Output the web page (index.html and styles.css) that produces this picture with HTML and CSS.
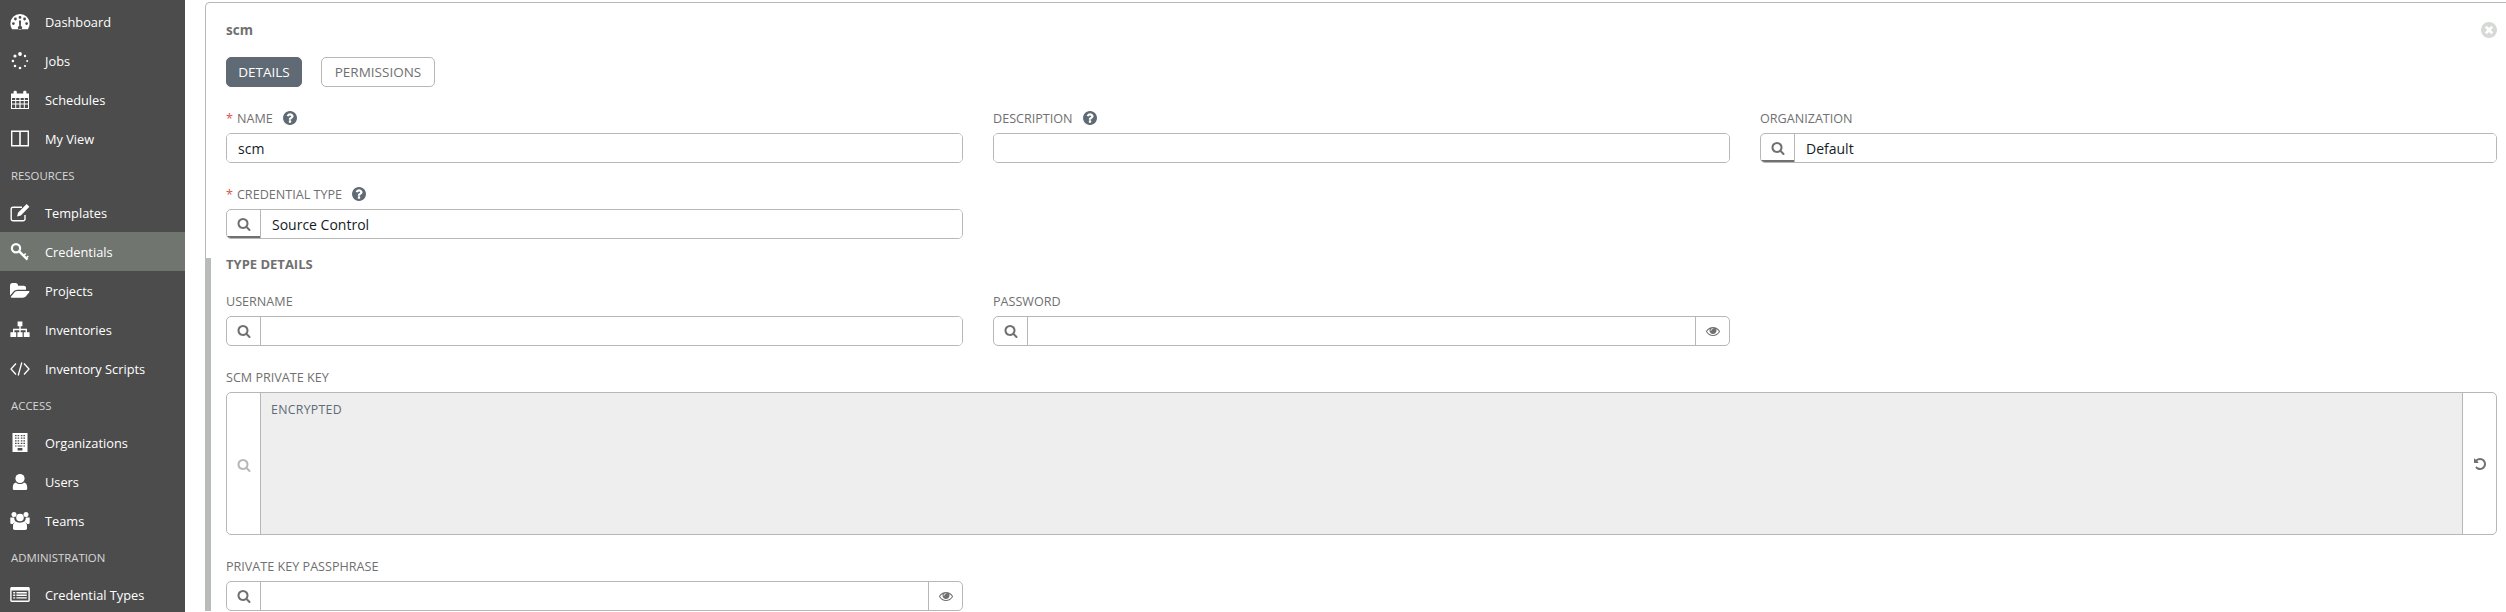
FILE: index.html
```html
<!DOCTYPE html>
<html lang="en">
<head>
    <meta charset="UTF-8">
    <title>Credentials</title>
    <link rel="stylesheet" href="styles.css">
</head>
<body>

    <!-- Icon sprite -->
    <svg class="sprite" xmlns="http://www.w3.org/2000/svg">
        <symbol id="i-search" viewBox="0 0 1792 1792"><path d="M1216 832q0-185-131.5-316.5t-316.5-131.5-316.5 131.5-131.5 316.5 131.5 316.5 316.5 131.5 316.5-131.5 131.5-316.5zm512 832q0 52-38 90t-90 38q-54 0-90-38l-343-342q-179 124-399 124-143 0-273.5-55.5t-225-150-150-225-55.5-273.5 55.5-273.5 150-225 225-150 273.5-55.5 273.5 55.5 225 150 150 225 55.5 273.5q0 220-124 399l343 343q37 37 37 90z"/></symbol>
        <symbol id="i-help" viewBox="128 128 1536 1536"><path d="M1024 1376v-192q0-14-9-23t-23-9h-192q-14 0-23 9t-9 23v192q0 14 9 23t23 9h192q14 0 23-9t9-23zm256-672q0-88-55.5-163t-138.5-116-170-41q-243 0-371 213-15 24 8 42l132 100q7 6 19 6 16 0 25-12 53-68 86-92 34-24 86-24 48 0 85.5 26t37.5 59q0 38-20 61t-68 45q-63 28-115.5 86.5t-52.5 125.5v36q0 14 9 23t23 9h192q14 0 23-9t9-23q0-19 21.5-49.5t54.5-49.5q32-18 49-28.5t46-35 44.5-48 28-60.5 12.5-81zm384 192q0 209-103 385.5t-279.5 279.5-385.5 103-385.5-103-279.5-279.5-103-385.5 103-385.5 279.5-279.5 385.5-103 385.5 103 279.5 279.5 103 385.5z"/></symbol>
        <symbol id="i-close" viewBox="128 128 1536 1536"><path d="M1277 1122q0-26-19-45l-181-181 181-181q19-19 19-45 0-27-19-46l-90-90q-19-19-46-19-26 0-45 19l-181 181-181-181q-19-19-45-19-27 0-46 19l-90 90q-19 19-19 46 0 26 19 45l181 181-181 181q-19 19-19 45 0 27 19 46l90 90q19 19 46 19 26 0 45-19l181-181 181 181q19 19 45 19 27 0 46-19l90-90q19-19 19-46zm387-226q0 209-103 385.5t-279.5 279.5-385.5 103-385.5-103-279.5-279.5-103-385.5 103-385.5 279.5-279.5 385.5-103 385.5 103 279.5 279.5 103 385.5z"/></symbol>
        <symbol id="i-eye" viewBox="0 256 1792 1280"><path d="M1664 960q-152-236-381-353 61 104 61 225 0 185-131.5 316.5t-316.5 131.5-316.5-131.5-131.5-316.5q0-121 61-225-229 117-381 353 133 205 333.5 326.5t434.5 121.5 434.5-121.5 333.5-326.5zm-720-384q0-20-14-34t-34-14q-125 0-214.5 89.5t-89.5 214.5q0 20 14 34t34 14 34-14 14-34q0-86 61-147t147-61q20 0 34-14t14-34zm848 384q0 34-20 69-140 230-376.5 368.5t-499.5 138.5-499.5-139-376.5-368q-20-35-20-69t20-69q140-229 376.5-368t499.5-139 499.5 139 376.5 368q20 35 20 69z"/></symbol>
        <symbol id="i-undo" viewBox="128 128 1536 1536"><path d="M1664 896q0 156-61 298t-164 245-245 164-298 61q-172 0-327-72.5t-264-204.5q-7-10-6.5-22.5t8.5-20.5l137-138q10-9 25-9 16 2 23 12 73 95 179 147t225 52q104 0 198.5-40.5t163.5-109.5 109.5-163.5 40.5-198.5-40.5-198.5-109.5-163.5-163.5-109.5-198.5-40.5q-98 0-188 35.5t-160 101.5l137 138q31 30 14 69-17 40-59 40h-448q-26 0-45-19t-19-45v-448q0-42 40-59 39-17 69 14l130 129q107-101 244.5-156.5t284.5-55.5q156 0 298 61t245 164 164 245 61 298z"/></symbol>
        <symbol id="i-folder" viewBox="0 0 1920 1792"><path d="M1879 952q0 31-31 66l-336 396q-43 51-120.5 86.5t-143.5 35.5h-1088q-34 0-60.5-13t-26.5-43q0-31 31-66l336-396q43-51 120.5-86.5t143.5-35.5h1088q34 0 60.5 13t26.5 43zm-343-344v160h-832q-94 0-197 47.5t-164 119.5l-337 396-5 6q0-4-.5-12.5t-.5-12.5v-960q0-92 66-158t158-66h320q92 0 158 66t66 158v32h544q92 0 158 66t66 158z"/></symbol>
        <symbol id="i-dashboard" viewBox="0 0 20 20"><path fill-rule="evenodd" d="M10 2A9.6 9.6 0 0 0 .4 11.6c0 2.2.6 4 1.7 5.6h15.8c1.1-1.6 1.7-3.4 1.7-5.6A9.6 9.6 0 0 0 10 2zM10 4a1.4 1.4 0 1 1 0 2.8A1.4 1.4 0 0 1 10 4zM5.4 5.6a1.4 1.4 0 1 1 0 2.8 1.4 1.4 0 0 1 0-2.8zM14.6 5.6a1.4 1.4 0 1 1 0 2.8 1.4 1.4 0 0 1 0-2.8zM3.4 10.2a1.4 1.4 0 1 1 0 2.8 1.4 1.4 0 0 1 0-2.8zM16.6 10.2a1.4 1.4 0 1 1 0 2.8 1.4 1.4 0 0 1 0-2.8zM9 8.5h2l-.2 5.4a2 2 0 1 1-1.6 0z"/></symbol>
        <symbol id="i-jobs" viewBox="0 0 20 20"><circle cx="10" cy="3" r="1.9"/><circle cx="15" cy="5" r="1.2"/><circle cx="17.2" cy="10" r="1"/><circle cx="15" cy="15" r="1.1"/><circle cx="10" cy="17" r="1.3"/><circle cx="5" cy="15" r="1.3"/><circle cx="2.9" cy="10" r="1.3"/><circle cx="5" cy="5" r="1.6"/></symbol>
        <symbol id="i-calendar" viewBox="0 0 20 20"><path fill-rule="evenodd" d="M1 3.5h2.6V2a1.3 1.3 0 0 1 1.3-1.3h.6A1.3 1.3 0 0 1 6.800 2v1.5h6.400V2a1.3 1.3 0 0 1 1.3-1.3h.6A1.3 1.3 0 0 1 16.400 2v1.5H19V19H1zM2 8v2h3.200V8zM6.200 8v2h3.200V8zM10.600 8v2h3.200V8zM14.800 8v2H18V8zM2 11v2.400h3.200V11zM6.200 11v2.400h3.200V11zM10.600 11v2.400h3.200V11zM14.800 11v2.400H18V11zM2 14.400V18h3.200v-3.600zM6.200 14.400V18h3.200v-3.600zM10.600 14.400V18h3.200v-3.600zM14.800 14.400V18H18v-3.600z"/></symbol>
        <symbol id="i-view" viewBox="0 0 20 20"><path fill-rule="evenodd" d="M1 1.5h18v16H1zM2.400 3v13h6.800V3zM10.800 3v13h6.800V3z"/></symbol>
        <symbol id="i-edit" viewBox="0 0 20 20"><path fill="none" stroke="currentColor" stroke-width="1.4" d="M15 12v4a1.800 1.800 0 0 1-1.800 1.800H3A1.800 1.800 0 0 1 1.200 16V6A1.800 1.800 0 0 1 3 4.200h9"/><path d="M16.600 1l2.800 2.800-8.600 8.800-3.700 1 .9-3.800z"/></symbol>
        <symbol id="i-key" viewBox="0 0 20 20"><g fill="none" stroke="currentColor"><circle cx="6" cy="6.200" r="4.100" stroke-width="2.200"/><path stroke-width="2.400" d="M9 9.200l8.500 8.500"/><path stroke-width="1.600" d="M13.500 13.800l2.300-2.300M16 16.300l2.300-2.300"/></g></symbol>
        <symbol id="i-sitemap" viewBox="0 0 20 20"><path d="M7.600 1.500h4.800v4.800H10.700v2.500h6.300v3.400h2.600v4.800h-5.800v-4.800h1.800v-2H10.700v2h1.900v4.800H7.400v-4.800h1.900v-2H4.400v2h1.800v4.800H.4v-4.800H3V8.800h6.300V6.300H7.600z"/></symbol>
        <symbol id="i-code" viewBox="0 0 20 20"><path fill="none" stroke="currentColor" stroke-width="1.300" d="M6 4.500L1 10l5 5.500M14 4.500l5 5.500-5 5.500M11.800 3.500L8.200 16.500"/></symbol>
        <symbol id="i-building" viewBox="0 0 20 20"><path fill-rule="evenodd" d="M2.500 0h15v19h-15zM5 2v1.200h1.600V2zM7.600 2v1.200h1.600V2zM10.800 2v1.200h1.600V2zM13.400 2v1.200H15V2zM5 4.600v1.200h1.600V4.600zM7.600 4.600v1.200h1.600V4.600zM10.800 4.600v1.200h1.600V4.600zM13.400 4.600v1.200H15V4.600zM5 7.200v1.200h1.600V7.200zM7.600 7.200v1.200h1.600V7.200zM10.800 7.200v1.200h1.600V7.200zM13.400 7.200v1.200H15V7.200zM5 9.800V11h1.600V9.800zM7.600 9.800V11h1.600V9.800zM10.800 9.800V11h1.600V9.800zM13.400 9.800V11H15V9.800zM5 12.400v1.200h1.600v-1.200zM13.400 12.400v1.200H15v-1.200zM7.600 12.400v1.200h4.800v-1.200zM7.600 15v2.400h4.800V15z"/></symbol>
        <symbol id="i-user" viewBox="0 0 20 20"><circle cx="10" cy="6.500" r="4.600"/><path d="M6 10.500c1 1 2.400 1.500 4 1.500s3-.5 4-1.500c2 .5 3.200 2 3.200 5v1c0 1-.7 1.500-1.700 1.500H4.500c-1 0-1.700-.5-1.700-1.500v-1c0-3 1.200-4.500 3.200-5z"/></symbol>
        <symbol id="i-users" viewBox="0 0 20 20"><circle cx="10" cy="6.500" r="3.800"/><circle cx="4" cy="3.500" r="2.500"/><circle cx="16" cy="3.500" r="2.500"/><path d="M.3 6.500h4c-.2 1.800.5 3.200 1.500 4.200-1.500.5-2.400 1.300-3 2.300H1.600C.6 13 .3 12.400.3 11.500zM19.700 6.500h-4c.2 1.800-.5 3.200-1.500 4.200 1.500.5 2.400 1.300 3 2.300h1.200c1 0 1.300-.6 1.300-1.500z"/><path d="M6 10.500c1 .8 2.500 1.200 4 1.200s3-.4 4-1.200c2 .5 3 2.200 3 5v1.800c0 1-.7 1.700-1.700 1.700H4.700c-1 0-1.700-.7-1.700-1.700v-1.800c0-2.800 1-4.500 3-5z"/></symbol>
        <symbol id="i-list" viewBox="0 0 20 20"><path fill-rule="evenodd" d="M1.800 2h16.400c.9 0 1.600.7 1.600 1.600v12c0 .9-.7 1.400-1.600 1.400H1.800C.9 17 .2 16.500.2 15.600v-12C.2 2.700.9 2 1.800 2zM1.600 5.600v9.800c0 .1.100.2.200.2h16.400c.1 0 .2-.1.200-.2V5.600zM3.200 7h2v1.400h-2zM6.400 7h10.400v1.400H6.400zM3.200 9.600h2V11h-2zM6.400 9.600h10.400V11H6.400zM3.200 12.200h2v1.400h-2zM6.400 12.200h10.400v1.400H6.400z"/></symbol>
    </svg>

    <nav class="sidebar">
        <a class="nav-item"><svg class="nav-icon"><use href="#i-dashboard"/></svg>Dashboard</a>
        <a class="nav-item"><svg class="nav-icon"><use href="#i-jobs"/></svg>Jobs</a>
        <a class="nav-item"><svg class="nav-icon"><use href="#i-calendar"/></svg>Schedules</a>
        <a class="nav-item"><svg class="nav-icon"><use href="#i-view"/></svg>My View</a>
        <div class="nav-section">RESOURCES</div>
        <a class="nav-item"><svg class="nav-icon"><use href="#i-edit"/></svg>Templates</a>
        <a class="nav-item nav-item-active"><svg class="nav-icon"><use href="#i-key"/></svg>Credentials</a>
        <a class="nav-item"><svg class="nav-icon"><use href="#i-folder"/></svg>Projects</a>
        <a class="nav-item"><svg class="nav-icon"><use href="#i-sitemap"/></svg>Inventories</a>
        <a class="nav-item"><svg class="nav-icon"><use href="#i-code"/></svg>Inventory Scripts</a>
        <div class="nav-section">ACCESS</div>
        <a class="nav-item"><svg class="nav-icon"><use href="#i-building"/></svg>Organizations</a>
        <a class="nav-item"><svg class="nav-icon"><use href="#i-user"/></svg>Users</a>
        <a class="nav-item"><svg class="nav-icon"><use href="#i-users"/></svg>Teams</a>
        <div class="nav-section">ADMINISTRATION</div>
        <a class="nav-item"><svg class="nav-icon"><use href="#i-list"/></svg>Credential Types</a>
    </nav>

    <main class="content">
        <form class="panel">

            <section class="panel-top">
                <div class="panel-head">
                    <div class="panel-title">scm</div>
                    <svg class="close-icon"><use href="#i-close"/></svg>
                </div>

                <div class="tabs">
                    <button type="button" class="tab tab-details">DETAILS</button>
                    <button type="button" class="tab tab-permissions">PERMISSIONS</button>
                </div>

                <div class="form-grid">
                    <div class="field">
                        <label class="field-label"><span class="required">*</span>NAME<svg class="help-icon"><use href="#i-help"/></svg></label>
                        <div class="control"><input class="text-input" type="text" value="scm"></div>
                    </div>
                    <div class="field">
                        <label class="field-label">DESCRIPTION<svg class="help-icon"><use href="#i-help"/></svg></label>
                        <div class="control"><input class="text-input" type="text"></div>
                    </div>
                    <div class="field">
                        <label class="field-label">ORGANIZATION</label>
                        <div class="control">
                            <span class="addon addon-selected"><svg class="addon-icon"><use href="#i-search"/></svg></span>
                            <input class="text-input" type="text" value="Default">
                        </div>
                    </div>
                    <div class="field">
                        <label class="field-label"><span class="required">*</span>CREDENTIAL TYPE<svg class="help-icon"><use href="#i-help"/></svg></label>
                        <div class="control">
                            <span class="addon addon-selected"><svg class="addon-icon"><use href="#i-search"/></svg></span>
                            <input class="text-input" type="text" value="Source Control">
                        </div>
                    </div>
                </div>
            </section>

            <section class="panel-details">
                <h3 class="details-title">TYPE DETAILS</h3>

                <div class="form-grid">
                    <div class="field">
                        <label class="field-label">USERNAME</label>
                        <div class="control">
                            <span class="addon"><svg class="addon-icon"><use href="#i-search"/></svg></span>
                            <input class="text-input" type="text">
                        </div>
                    </div>
                    <div class="field">
                        <label class="field-label">PASSWORD</label>
                        <div class="control">
                            <span class="addon"><svg class="addon-icon"><use href="#i-search"/></svg></span>
                            <input class="text-input" type="text">
                            <span class="addon addon-right"><svg class="eye-icon"><use href="#i-eye"/></svg></span>
                        </div>
                    </div>
                    <div class="field field-wide">
                        <label class="field-label">SCM PRIVATE KEY</label>
                        <div class="control control-tall">
                            <span class="addon addon-muted"><svg class="addon-icon"><use href="#i-search"/></svg></span>
                            <textarea class="key-input" readonly>ENCRYPTED</textarea>
                            <span class="addon addon-right"><svg class="undo-icon"><use href="#i-undo"/></svg></span>
                        </div>
                    </div>
                    <div class="field">
                        <label class="field-label">PRIVATE KEY PASSPHRASE</label>
                        <div class="control">
                            <span class="addon"><svg class="addon-icon"><use href="#i-search"/></svg></span>
                            <input class="text-input" type="text">
                            <span class="addon addon-right"><svg class="eye-icon"><use href="#i-eye"/></svg></span>
                        </div>
                    </div>
                </div>
            </section>

        </form>
    </main>

</body>
</html>
```

FILE: styles.css
```css
body {
    font-family: "Open Sans", sans-serif;
    margin: 0;
    height: 100vh;
    overflow: hidden;
    display: flex;
    background-color: #fff;
}
.sprite {
    display: none;
}

/* Sidebar */
.sidebar {
    width: 185px;
    flex-shrink: 0;
    padding-top: 2px;
    background-color: #4c4c4c;
}
.nav-item {
    display: flex;
    align-items: center;
    height: 39px;
    padding-left: 10px;
    font-size: 12.8px;
    color: #fff;
}
.nav-item-active {
    background-color: #707570;
}
.nav-icon {
    width: 20px;
    height: 20px;
    margin-right: 15px;
    fill: currentColor;
}
.nav-section {
    display: flex;
    align-items: center;
    height: 35px;
    padding-left: 11px;
    font-size: 11.4px;
    color: #d7d7d7;
}

/* Main panel */
.content {
    flex: 1;
    padding: 2px 0 0 20px;
    min-width: 0;
}
.panel-top {
    padding: 0 9px 20px 20px;
    border-top: 1px solid #b7b7b7;
    border-left: 1px solid #b7b7b7;
    border-top-left-radius: 5px;
}
.panel-head {
    display: flex;
    justify-content: space-between;
    align-items: center;
    height: 54px;
}
.panel-title {
    font-size: 13.5px;
    font-weight: 700;
    color: #707070;
}
.close-icon {
    width: 16px;
    height: 16px;
    fill: #d7d9d7;
}
.tabs {
    display: flex;
    gap: 19px;
    margin-bottom: 23px;
}
.tab {
    height: 30px;
    padding: 0;
    font-family: inherit;
    font-size: 13.5px;
    color: #707070;
    background-color: #fff;
    border: 1px solid #b7b7b7;
    border-radius: 5px;
}
.tab-details {
    width: 76px;
    color: #fff;
    background-color: #5f6a74;
    border-color: #5f6a74;
}
.tab-permissions {
    width: 114px;
}

/* Form */
.form-grid {
    display: grid;
    grid-template-columns: repeat(3, 1fr);
    column-gap: 30px;
    row-gap: 23px;
}
.field-wide {
    grid-column: 1 / -1;
}
.field-label {
    display: flex;
    align-items: center;
    height: 16px;
    margin-bottom: 7px;
    font-size: 12.6px;
    color: #707070;
}
.required {
    margin-right: 4px;
    color: #d9534f;
}
.help-icon {
    width: 14px;
    height: 14px;
    margin-left: 10px;
    fill: #5f6a74;
}
.control {
    display: flex;
    height: 30px;
    box-sizing: border-box;
    border: 1px solid #b7b7b7;
    border-radius: 5px;
    overflow: hidden;
}
.control-tall {
    height: 143px;
}
.text-input {
    flex: 1;
    min-width: 0;
    padding: 0 11px;
    font-family: inherit;
    font-size: 14px;
    color: #161b1f;
    border: none;
}
.addon {
    display: flex;
    align-items: center;
    justify-content: center;
    width: 33px;
    flex-shrink: 0;
    border-right: 1px solid #b7b7b7;
    color: #707070;
}
.addon-right {
    border-right: none;
    border-left: 1px solid #b7b7b7;
}
.addon-selected {
    box-shadow: inset 0 -2px 0 #707070;
}
.addon-muted {
    padding-top: 3px;
    color: #b7b7b7;
}
.addon-icon {
    width: 14px;
    height: 14px;
    fill: currentColor;
}
.eye-icon {
    width: 14px;
    height: 10px;
    fill: currentColor;
}
.undo-icon {
    width: 12px;
    height: 12px;
    fill: currentColor;
}
.key-input {
    flex: 1;
    min-width: 0;
    padding: 8px 10px;
    font-family: inherit;
    font-size: 12.3px;
    letter-spacing: 0.3px;
    color: #5f6a74;
    background-color: #eee;
    border: none;
    resize: none;
}

/* Type details */
.panel-details {
    padding: 0 9px 0 15px;
    border-left: 6px solid #b7bcb8;
}
.details-title {
    margin: -1px 0 23px;
    line-height: 12px;
    font-size: 13px;
    font-weight: 700;
    color: #707070;
}
```
